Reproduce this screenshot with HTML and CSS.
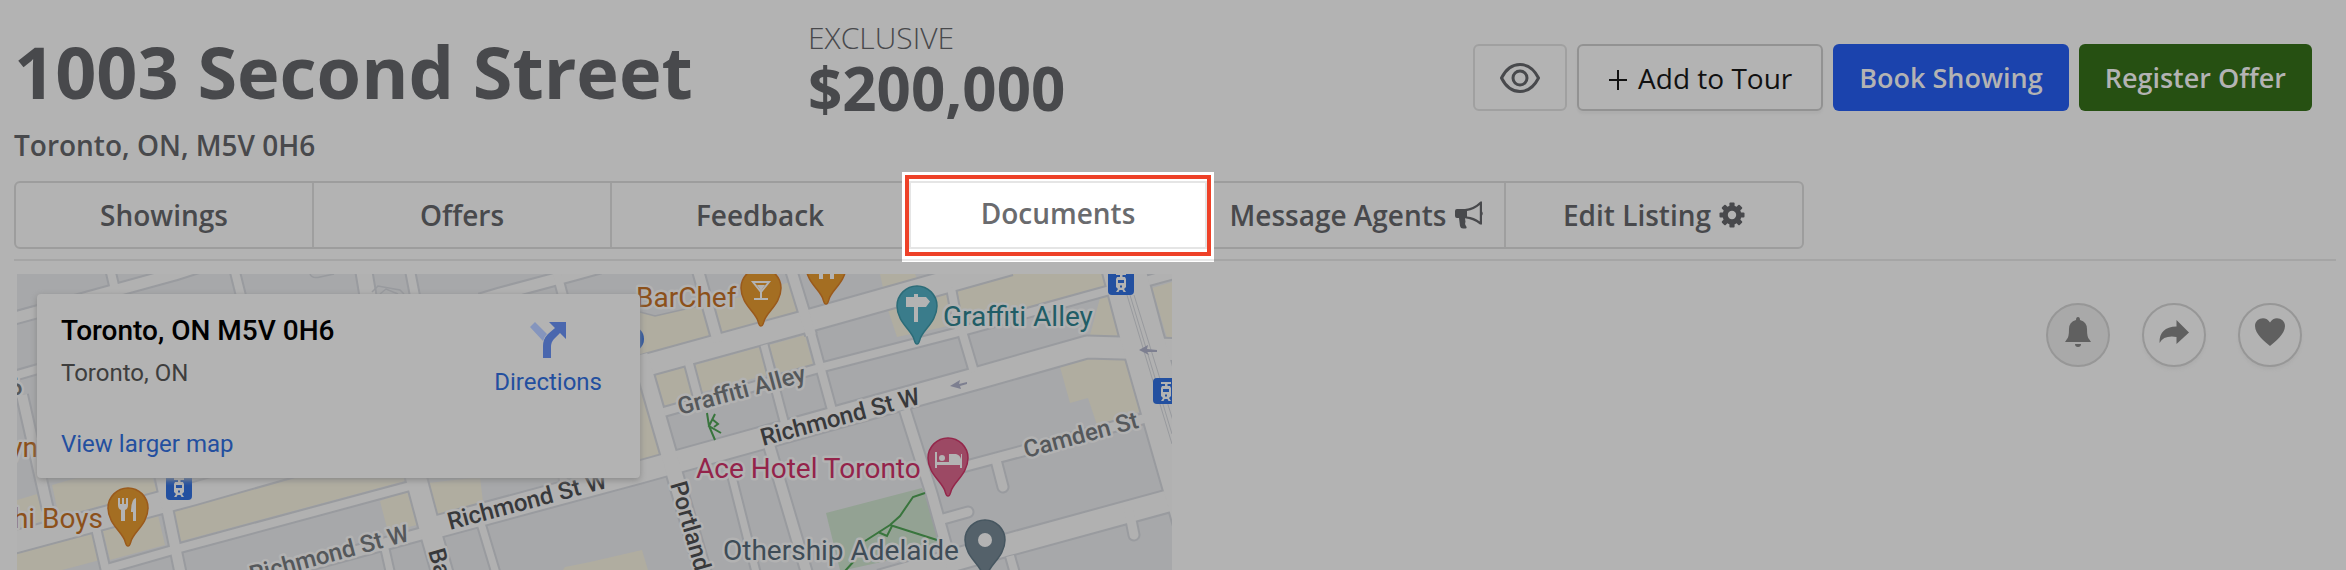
FILE: index.html
```html
<!DOCTYPE html>
<html lang="en">
<head>
<meta charset="utf-8">
<title>1003 Second Street</title>
<link rel="stylesheet" href="styles.css">
</head>
<body>
<header class="listing-header">
  <div class="address">
    <h1 class="address-title">1003 Second Street</h1>
    <p class="address-city">Toronto, ON, M5V 0H6</p>
  </div>
  <div class="price">
    <span class="price-label">EXCLUSIVE</span>
    <strong class="price-value">$200,000</strong>
  </div>
  <div class="actions">
    <button class="btn btn-icon" type="button" aria-label="Preview listing">
      <svg width="42" height="32" viewBox="0 0 42 32" fill="none" stroke="currentColor" stroke-width="3"><path d="M2.500 16C7 7 14 2.500 21 2.500S35 7 39.500 16C35 25 28 29.500 21 29.500S7 25 2.500 16Z" stroke-linejoin="round"/><circle cx="21" cy="16" r="7"/></svg>
    </button>
    <button class="btn btn-outline" type="button"><svg class="plus" width="20" height="20" viewBox="0 0 20 20" stroke="currentColor" stroke-width="2"><path d="M10 0V20M1 10H19"/></svg>Add to Tour</button>
    <button class="btn btn-blue" type="button">Book Showing</button>
    <button class="btn btn-green" type="button">Register Offer</button>
  </div>
</header>

<nav class="tabs" aria-label="Listing sections">
  <a class="tab" href="#showings">Showings</a>
  <a class="tab" href="#offers">Offers</a>
  <a class="tab" href="#feedback">Feedback</a>
  <a class="tab tab-active" href="#documents"><span class="spotlight"></span><span class="tab-text">Documents</span></a>
  <a class="tab" href="#message">Message Agents
    <svg width="28" height="28" viewBox="0 0 28 28"><path d="M2 8Q0 8 0 10V15Q0 17 2 17H4L5 25Q5.500 27.500 8 27.500H10.500Q12.500 27 11 25Q9.500 23 10.500 21L10 17.200Q18 18 25 23.500H27V14.500Q28.500 12.500 27 10.500V0.500H25.500Q18 7.500 10 8Z" fill="currentColor"/><path d="M12 10Q19 9 24.800 4V20.500Q19 16 12 15.500Z" fill="#b3b3b3"/></svg></a>
  <a class="tab" href="#edit">Edit Listing
    <svg width="26" height="26" viewBox="-13 -13 26 26"><g fill="currentColor"><circle r="9.500"/><rect x="-2.600" y="-12.500" width="5.200" height="25" rx="1"/><rect x="-2.600" y="-12.500" width="5.200" height="25" rx="1" transform="rotate(45)"/><rect x="-2.600" y="-12.500" width="5.200" height="25" rx="1" transform="rotate(90)"/><rect x="-2.600" y="-12.500" width="5.200" height="25" rx="1" transform="rotate(135)"/></g><circle r="4.200" fill="#b3b3b3"/></svg></a>
</nav>

<main class="listing-body">
  <section class="map" aria-label="Map">
    <svg class="map-canvas" viewBox="17 274 1155 296" preserveAspectRatio="xMinYMin slice">
      <defs>
        <g id="roads">
          <path class="w22" d="M0 546 193 494 640 367 800 323 1010 264"/>
          <path class="w22" d="M436 527 640 472 978 378 1087 347 1190 350"/>
          <path class="w11" d="M240 583 436 530M0 322 175 274 200 266M480 300 500 294 575 274 600 267"/>
          <path class="w8" d="M660 413 823 367 955 333 1110 290M0 380 45 367M103 570 180 548 410 486"/>
          <path class="w9" d="M955 469 1150 417M1147 281 1190 269"/>
          <path class="w22" d="M880 581 1007 545 1190 495"/>
          <path class="w15" d="M640 355 669 455 704 575M362 260 368 296"/>
          <path class="w7" d="M729 465 758 580M764 345 785 425M383 540 392 580M480 520 498 580M562 470 564 484"/>
          <path class="w10" d="M769 445 809 580M695 260 718 342M788 260 811 335M905 410 932 495 957 585M160 474 182 580M22 395 48 510"/>
          <path class="w8" d="M811 333 832 410M688 360 700 405M961 328 974 372M951 288 959 330M96 528 108 580M108 260 116 294M232 260 241 296M408 260 415 296M554 262 563 296"/>
          <path class="w20" d="M414 470 430 530 445 582"/>
          <path class="w42" d="M1120 255 1142 338 1194 520"/>
          <path class="w8" d="M1010 556 1018 584"/>
          <path class="w9 cap" d="M996 460 1003 487M943 519 968 512M1129 510 1134 535"/>
        </g>
        <path id="pin" d="M0 38C-3 38-2 33-5 29C-10 21-20 13-20 0A20 20 0 0 1 20 0C20 13 10 21 5 29C2 33 3 38 0 38Z"/>
        <g id="tram">
          <rect width="26" height="26" rx="4" fill="#2350a0"/>
          <path d="M8 4H18V6H14.500V8H17L18 10V18L16 20L18 23H15.500L14.500 21H11.500L10.500 23H8L10 20L8 18V10L9 8H12V6H8Z" fill="#b3b3b3"/>
          <path d="M10 11H16V14H10ZM12 16.500H14V18.500H12Z" fill="#2350a0"/>
        </g>
      </defs>
      <rect x="17" y="274" width="1155" height="296" fill="#a7a8aa"/>
      <g fill="#b0ada0">
        <path d="M52 485 80 477H152L157 491 59 517ZM170 512 293 478H405V481L178 542ZM103 531 158 515 165 545 110 560ZM17 553 92 534 100 560 17 582ZM380 501 407 491 417 525 388 532ZM428 483 480 477 483 502 436 515ZM17 500 37 494 45 520 17 530Z"/>
        <path d="M640 312 655 316 703 305 712 338 640 357ZM714 305 790 282 798 313 723 335ZM655 375 686 367 693 397 665 407ZM695 365 760 347 767 375 702 392ZM769 345 805 335 813 365 778 373ZM640 388 660 455 640 461ZM563 570 565 567 590 562 642 550 648 570Z"/>
        <path d="M888 310 947 293 953 325 897 337ZM957 289 1013 274H1103L1107 286 963 324ZM1100 298 1108 297 1122 338 1090 335ZM1060 367 1088 358 1128 360 1145 410 1097 425 1088 398 1070 403ZM1152 288 1172 282V338H1167ZM880 274H915L917 278 883 288Z"/>
      </g>
      <path d="M826 513 922 488 945 548 845 570H840Z" fill="#93a293"/>
      <use href="#roads" class="road-edge"/>
      <use href="#roads" class="road-fill"/>
      <g fill="none" stroke="#989a9e">
        <path stroke-width="1.500" d="M640 312 655 316 703 305M372 292 378 286 400 290 404 294M380 294 386 289 398 294M310 274Q312 279 320 277L334 274"/>
        <path d="M1130 295 1172 434M1134 295 1174 424M1127 295 1172 444"/>
      </g>
      <g fill="none" stroke="#39753d" stroke-width="2">
        <path d="M925 493 913 497 900 516 890 525 865 541M890 525 937 540M878 532 887 536 892 526M845 571 855 560"/>
        <path d="M707 413 709 426 715 440M715 414 709 426 721 433M712 419 718 424 714 427"/>
      </g>
      <path d="M950 386 960 380 959 384 967 382V384L960 386 961 389ZM1139 350 1148 345 1147 349 1157 350V352L1147 352 1149 355Z" fill="#7d7f90"/>
      <use href="#tram" x="166" y="474"/><use href="#tram" x="1108" y="269"/><use href="#tram" x="1153" y="378"/>
      <circle cx="631" cy="339" r="13" fill="#2350a0"/>
      <g stroke-width="1.500">
        <g transform="translate(128 508)" fill="#a46e22" stroke="#9a5a1c"><use href="#pin"/><path d="M-10-10V-3Q-10 1-7 2V13H-3V2Q0 1 0-3V-10H-2V-4H-4V-10H-6V-4H-8V-10ZM8-10Q3-9 3 4H5V13H8Z" fill="#b3b3b3" stroke="none"/></g>
        <g transform="translate(761 288)" fill="#a46e22" stroke="#9a5a1c"><use href="#pin"/><path d="M-8-6H8L0 4ZM0 4V11M-7 11H7" fill="none" stroke="#b3b3b3" stroke-width="2"/><path d="M-4-3H4L0 3Z" fill="#b3b3b3" stroke="none"/></g>
        <g transform="translate(826 266)" fill="#a46e22" stroke="#9a5a1c"><use href="#pin"/><path d="M-7 0V13H-3V0ZM4 0V13H8V0Z" fill="#b3b3b3" stroke="none"/></g>
        <g transform="translate(917 306)" fill="#3a7c8b" stroke="#2c6c78"><use href="#pin"/><path d="M-11-9H-3V-12H1V-9H9L13-4.500 9 1H1V16H-3V1H-11Z" fill="#b3b3b3" stroke="none"/></g>
        <g transform="translate(948 458)" fill="#9c4964" stroke="#94274b"><use href="#pin"/><path d="M-13-6H-11V4H1V-4H8Q12-3 13 1V-4H14V10H12V7H-11V10H-13Z" fill="#b3b3b3" stroke="none"/><circle cx="-6" cy="0" r="3" fill="#b3b3b3" stroke="none"/></g>
        <g transform="translate(985 540)" fill="#54616a" stroke="#465660"><use href="#pin"/><circle r="7" fill="#b3b3b3" stroke="none"/></g>
      </g>
      <g class="map-place">
        <text x="636" y="307" fill="#8c501a">BarChef</text>
        <text x="103" y="528" fill="#8c501a" text-anchor="end">hi Boys</text>
        <text x="38" y="457" fill="#8c501a" text-anchor="end">yn</text>
        <text x="943" y="326" fill="#215d66">Graffiti Alley</text>
        <text x="696" y="478" fill="#94234a">Ace Hotel Toronto</text>
        <text x="723" y="560" fill="#3e4c57">Othership Adelaide</text>
      </g>
      <g class="map-street">
        <text transform="translate(680 415) rotate(-15)" class="minor">Graffiti Alley</text>
        <text transform="translate(763 446) rotate(-15)">Richmond St W</text>
        <text transform="translate(450 530) rotate(-15)">Richmond St W</text>
        <text transform="translate(252 583) rotate(-15)" class="minor">Richmond St W</text>
        <text transform="translate(1026 458) rotate(-15)" class="minor">Camden St</text>
        <text transform="translate(670 484) rotate(74)">Portland</text>
        <text transform="translate(428 551) rotate(74)">Bathurst</text>
        <text transform="translate(10 396) rotate(-10)" class="minor">6</text>
      </g>
    </svg>
    <div class="map-card">
      <div class="map-card-info">
        <h2 class="map-card-title">Toronto, ON M5V 0H6</h2>
        <p class="map-card-city">Toronto, ON</p>
        <a class="map-link" href="#map">View larger map</a>
      </div>
      <a class="directions" href="#directions">
        <svg width="36" height="36" viewBox="0 0 36 36"><path d="M5 0 0 5 13 19Q14 15 17 12Z" fill="#8595bd"/><path d="M13 36V24Q13 17 18 12L25 6 19 0H36V17L30 11 24 17Q21 20 21 25V36Z" fill="#4a67ae"/></svg>
        Directions
      </a>
    </div>
  </section>
  <div class="quick-actions">
    <button class="round round-on" type="button" aria-label="Notifications"><svg width="26" height="30" viewBox="0 0 26 30"><path d="M13 0Q15 0 15 3Q22 5 22 12Q22 20 24 22L26 25H0L2 22Q4 20 4 12Q4 5 11 3Q11 0 13 0ZM10 27H16Q16 30 13 30T10 27Z" fill="currentColor"/></svg></button>
    <button class="round" type="button" aria-label="Share"><svg width="30" height="24" viewBox="0 0 30 24"><path d="M17.500 0 30 12.500 17.500 24V17Q5 15 0.500 23Q0 7 17.500 6.500Z" fill="currentColor"/></svg></button>
    <button class="round" type="button" aria-label="Favourite"><svg width="30" height="28" viewBox="0 0 30 28"><path d="M15 28C10 24 0 16 0 8C0 0 11-3 15 4.500C19-3 30 0 30 8C30 16 20 24 15 28Z" fill="currentColor"/></svg></button>
  </div>
</main>
</body>
</html>
```
FILE: styles.css
```css
* { box-sizing: border-box; }

body {
  margin: 0;
  padding: 0 10px 0 14px;
  background: #b3b3b3;
  color: #48494c;
  font-family: "Open Sans", sans-serif;
  font-size: 28px;
}

h1, h2, p { margin: 0; }
a { color: inherit; text-decoration: none; }
button { font: inherit; cursor: pointer; }
svg { display: block; flex: none; }

.listing-header {
  display: grid;
  grid-template-columns: minmax(0, 794px) auto 1fr;
  align-items: start;
  height: 181px;
}

.address-title {
  padding-top: 22px;
  font-size: 72px;
  font-weight: 700;
  line-height: 98px;
}
.address-city { font-weight: 600; line-height: 50px; }

.price { display: flex; flex-direction: column; padding-top: 18px; }
.price-label { font-size: 30px; font-weight: 300; line-height: 40px; }
.price-value { font-size: 60px; font-weight: 700; line-height: 60px; }

.actions {
  display: flex;
  justify-content: flex-end;
  gap: 10px;
  padding: 44px 24px 0 0;
}
.btn {
  display: flex;
  align-items: center;
  justify-content: center;
  gap: 10px;
  height: 67px;
  padding: 0 24px;
  border: 2px solid transparent;
  border-radius: 6px;
  font-size: 27px;
  font-weight: 600;
  color: #b3b3b3;
}
.btn-icon { width: 94px; padding: 0; background: transparent; border-color: #a0a0a0; color: #48494c; }
.btn-outline { padding: 0 29px; background: transparent; border-color: #929292; color: #111; font-size: 28px; font-weight: 500; box-shadow: 0 3px 2px #adadad; }
.plus { margin-top: 4px; }
.btn-blue { background: #1b43ad; }
.btn-green { background: #265012; }

.tabs {
  display: grid;
  grid-template-columns: repeat(5, minmax(0, 298px)) 1fr;
  max-width: 1790px;
  height: 68px;
  border: 2px solid #9d9d9d;
  border-radius: 6px;
}
.tab {
  position: relative;
  display: flex;
  align-items: center;
  justify-content: center;
  gap: 8px;
  border-right: 2px solid #9f9f9f;
  font-weight: 600;
  white-space: nowrap;
}
.tab:last-child { border-right: 0; }
.tab-active { z-index: 1; color: #6a6b6e; }
.tab-text { position: relative; padding-bottom: 4px; }
.spotlight {
  position: absolute;
  inset: -11px -8px -15px;
  background: linear-gradient(to top, #fff 1px, #e8e8e8 1px 3px, #fff 3px);
}
.spotlight::before,
.spotlight::after { content: ""; position: absolute; }
.spotlight::before { inset: 3px 3px 6px; border: 4px solid #ee4128; }
.spotlight::after { inset: 9px 7px 13px; border: 2px solid #e5e5e5; }

.listing-body {
  display: flex;
  justify-content: space-between;
  margin-top: 10px;
  border-top: 2px solid #a5a5a5;
}

.map {
  position: relative;
  flex: 0 1 1155px;
  height: 296px;
  margin: 13px 0 0 3px;
  overflow: hidden;
  font-family: Roboto, sans-serif;
}
.map-canvas { width: 100%; height: 100%; }

/* Roads are stroked twice: a wider edge first, the surface over it. */
.road-edge { --edge: 4px; fill: none; stroke: #999b9f; stroke-linejoin: round; }
.road-fill { --edge: 0px; fill: none; stroke: #b1b1b1; stroke-linejoin: round; }
.w7 { stroke-width: calc(7px + var(--edge)); }
.w8 { stroke-width: calc(8px + var(--edge)); }
.w9 { stroke-width: calc(9px + var(--edge)); }
.w10 { stroke-width: calc(10px + var(--edge)); }
.w11 { stroke-width: calc(11px + var(--edge)); }
.w15 { stroke-width: calc(15px + var(--edge)); }
.w20 { stroke-width: calc(20px + var(--edge)); }
.w22 { stroke-width: calc(21px + var(--edge)); }
.w42 { stroke-width: calc(42px + var(--edge)); }
.cap { stroke-linecap: round; }

.map-place, .map-street { paint-order: stroke; stroke: #b2b2b2; stroke-width: 5px; stroke-linejoin: round; }
.map-place { font-size: 28px; }
.map-street { font-size: 24px; font-weight: 500; fill: #38393b; }
.map-street .minor { fill: #55585b; }

.map-card {
  position: absolute;
  top: 20px;
  left: 20px;
  display: flex;
  justify-content: space-between;
  width: 603px;
  height: 184px;
  padding: 19px 38px 0 24px;
  border-radius: 4px;
  background: #b3b3b3;
  box-shadow: 0 2px 6px #888;
  font-size: 24px;
}
.map-card-title { font-size: 28px; font-weight: 500; line-height: 36px; color: #000; }
.map-card-city { padding-top: 6px; line-height: 36px; color: #3e3e3e; }
.map-link { display: block; padding-top: 35px; line-height: 36px; color: #234f9f; }
.directions {
  display: flex;
  flex-direction: column;
  align-items: center;
  gap: 6px;
  padding-top: 9px;
  line-height: 36px;
  color: #234f9f;
}

.quick-actions { display: flex; gap: 32px; padding: 42px 34px 0 0; }
.round {
  display: flex;
  align-items: center;
  justify-content: center;
  width: 64px;
  height: 64px;
  padding: 0 0 6px;
  border: 2px solid #979797;
  border-radius: 50%;
  background: #b3b3b3;
  color: #606060;
  box-shadow: 0 3px 3px #adadad;
}
.round-on { background: #a9a9a9; box-shadow: none; }
```
